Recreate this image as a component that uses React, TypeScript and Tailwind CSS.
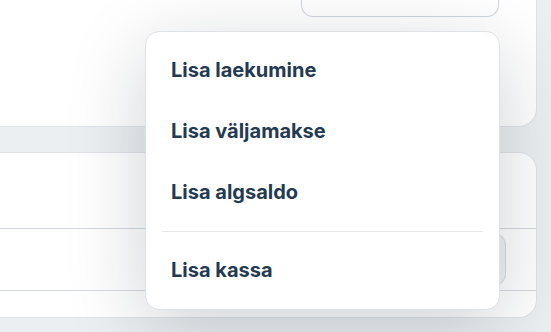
import React from 'react';

const items = ['Lisa laekumine', 'Lisa väljamakse', 'Lisa algsaldo'];

const MenuItem: React.FC<{ label: string }> = ({ label }) => (
  <button className="block w-full text-left px-[17px] py-4 text-[20px] leading-[29px] font-bold text-[#243a52] rounded-lg hover:bg-slate-50">
    {label}
  </button>
);

export default function App() {
  return (
    <div className="relative w-[551px] h-[332px] overflow-hidden bg-[#eceff1] font-['Inter',sans-serif]">
      {/* top card, only its lower part is in view */}
      <div className="h-[127px] mr-[14px] bg-white rounded-br-[18px] border-b border-r border-[#dfe3e7] flex justify-end pr-[37px]">
        <div className="w-[198px] h-[17px] border border-t-0 border-[#cdd6de] rounded-b-xl" />
      </div>

      {/* second card */}
      <div className="mt-[25px] h-[166px] mr-[14px] bg-white rounded-r-[18px] border-y border-r border-[#dfe3e7] flex flex-col">
        <div className="h-[76px] border-b border-[#d3d9df]" />
        <div className="h-[62px] border-b border-[#d3d9df] flex items-center justify-end pr-[30px]">
          <div className="w-[80px] h-[53px] rounded-xl border border-[#d6dce1] bg-[#f1f3f5]" />
        </div>
      </div>

      {/* dropdown menu */}
      <div className="absolute left-[145px] top-[31px] w-[355px] p-2 bg-white rounded-[14px] border border-[#dde2e7] shadow-[0_20px_80px_rgba(15,23,42,0.2)]">
        {items.map(label => (
          <MenuItem key={label} label={label} />
        ))}
        <div className="mx-2 my-2 h-px bg-[#e5e9ed]" />
        <MenuItem label="Lisa kassa" />
      </div>
    </div>
  );
}
